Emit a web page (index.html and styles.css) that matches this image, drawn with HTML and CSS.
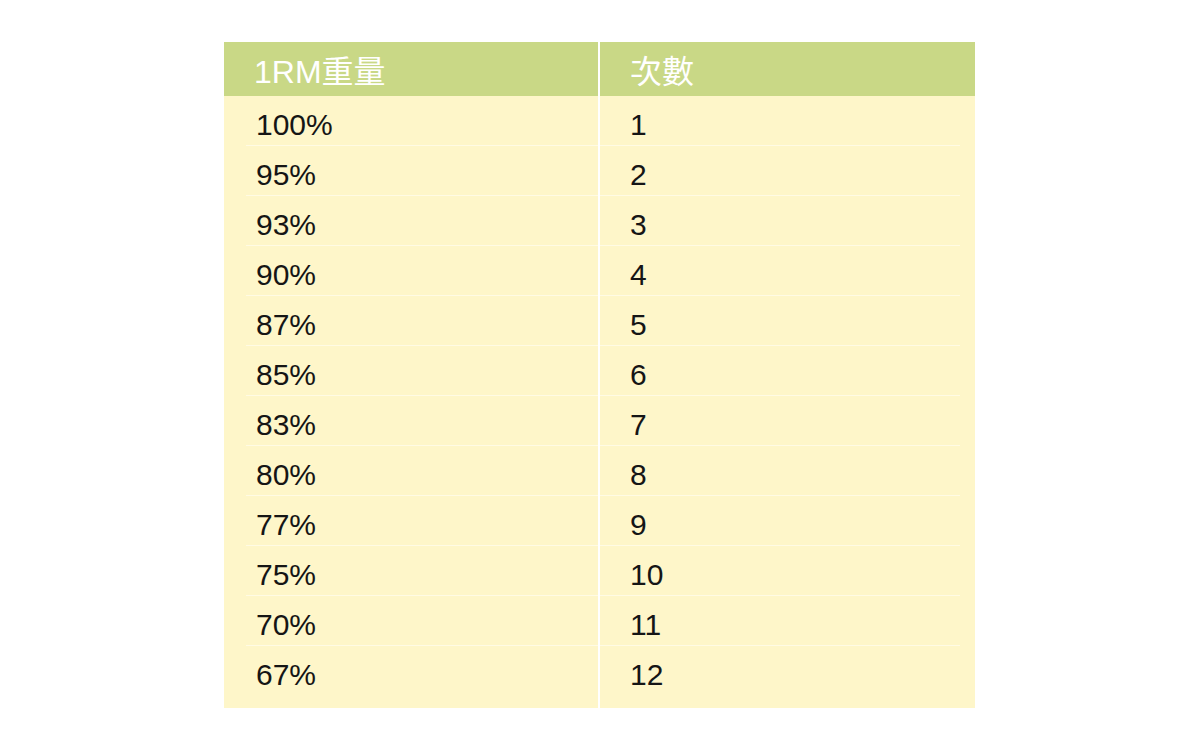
FILE: index.html
```html
<!DOCTYPE html>
<html lang="zh-Hant">
<head>
<meta charset="utf-8">
<title>1RM重量 次數</title>
<link rel="stylesheet" href="styles.css">
</head>
<body>
<div class="page">
  <div class="table">
    <div class="row head">
      <div class="cell c1"><div class="in">1RM重量</div></div>
      <div class="cell c2"><div class="in">次數</div></div>
    </div>
    <div class="row"><div class="cell c1"><div class="in">100%</div></div><div class="cell c2"><div class="in">1</div></div></div>
    <div class="row"><div class="cell c1"><div class="in">95%</div></div><div class="cell c2"><div class="in">2</div></div></div>
    <div class="row"><div class="cell c1"><div class="in">93%</div></div><div class="cell c2"><div class="in">3</div></div></div>
    <div class="row"><div class="cell c1"><div class="in">90%</div></div><div class="cell c2"><div class="in">4</div></div></div>
    <div class="row"><div class="cell c1"><div class="in">87%</div></div><div class="cell c2"><div class="in">5</div></div></div>
    <div class="row"><div class="cell c1"><div class="in">85%</div></div><div class="cell c2"><div class="in">6</div></div></div>
    <div class="row"><div class="cell c1"><div class="in">83%</div></div><div class="cell c2"><div class="in">7</div></div></div>
    <div class="row"><div class="cell c1"><div class="in">80%</div></div><div class="cell c2"><div class="in">8</div></div></div>
    <div class="row"><div class="cell c1"><div class="in">77%</div></div><div class="cell c2"><div class="in">9</div></div></div>
    <div class="row"><div class="cell c1"><div class="in">75%</div></div><div class="cell c2"><div class="in">10</div></div></div>
    <div class="row"><div class="cell c1"><div class="in">70%</div></div><div class="cell c2"><div class="in">11</div></div></div>
    <div class="row last"><div class="cell c1"><div class="in">67%</div></div><div class="cell c2"><div class="in">12</div></div></div>
  </div>
</div>
</body>
</html>
```
FILE: styles.css
```css
html, body {
  margin: 0;
  padding: 0;
  background: #ffffff;
}
body {
  font-family: "Liberation Sans", "Noto Sans CJK TC", sans-serif;
  color: #151515;
}
.page {
  padding: 42px 0 0 224px;
}
.table {
  width: 751px;
  display: flex;
  flex-direction: column;
}
.row {
  display: grid;
  grid-template-columns: 374px 375px;
  column-gap: 2px;
}
.cell {
  background: #fef6c9;
}
.row .c1 {
  padding-left: 22px;
}
.row .c2 {
  padding-right: 15px;
}
.row .in {
  height: 50px;
  line-height: 41px;
  padding-top: 8px;
  box-sizing: border-box;
  border-bottom: 1px solid #fffbe4;
  font-size: 30px;
}
.row .c1 .in {
  padding-left: 10px;
}
.row .c2 .in {
  padding-left: 30px;
}
.row.last .in {
  border-bottom: none;
  height: 62px;
}
.row.head .cell {
  background: #c9d886;
  padding: 0;
}
.row.head .in {
  height: 54px;
  line-height: 48px;
  padding-top: 6px;
  border-bottom: none;
  color: #ffffff;
  font-size: 32px;
}
.row.head .c1 .in {
  padding-left: 30px;
}
.row.head .c2 .in {
  padding-left: 30px;
}
```
